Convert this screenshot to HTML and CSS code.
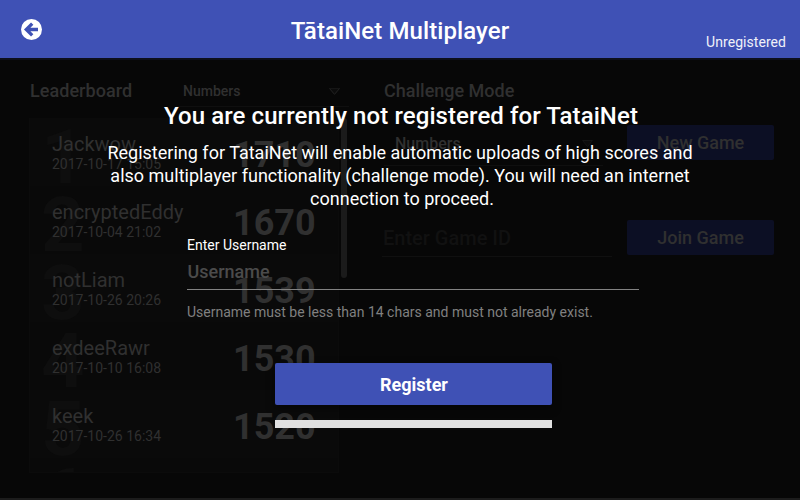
FILE: index.html
```
<!DOCTYPE html>
<html lang="en">
<head>
<meta charset="utf-8">
<title>TātaiNet Multiplayer</title>
<link rel="stylesheet" href="styles.css">
</head>
<body>
<header class="bar">
  <svg class="back" viewBox="0 0 21 21"><circle cx="10.5" cy="10.5" r="10.5" fill="#fff"/><path d="M11.2 4.6 L5.3 10.5 L11.2 16.4 M5.8 10.5 H17" fill="none" stroke="#3f51b5" stroke-width="3.3"/></svg>
  <h1 class="title">TātaiNet Multiplayer</h1>
  <span class="status">Unregistered</span>
</header>
<main class="page">
  <section class="leaderboard">
    <div class="head">
      <h2>Leaderboard</h2>
      <div class="select small"><span>Numbers</span><svg class="arrow" viewBox="0 0 11 7"><path d="M.5 .5H10.5L5.5 6.5Z"/><path class="edge" d="M.5 .5L5.5 6.3L10.5 .5"/></svg></div>
    </div>
    <div class="scroller">
      <ul class="list">
        <li><b class="rank">1</b><div class="who"><span class="name">Jackwow</span><span class="date">2017-10-17 15:05</span></div><b class="score">1710</b></li>
        <li><b class="rank">2</b><div class="who"><span class="name">encryptedEddy</span><span class="date">2017-10-04 21:02</span></div><b class="score">1670</b></li>
        <li><b class="rank">3</b><div class="who"><span class="name">notLiam</span><span class="date">2017-10-26 20:26</span></div><b class="score">1539</b></li>
        <li><b class="rank">4</b><div class="who"><span class="name">exdeeRawr</span><span class="date">2017-10-10 16:08</span></div><b class="score">1530</b></li>
        <li><b class="rank">5</b><div class="who"><span class="name">keek</span><span class="date">2017-10-26 16:34</span></div><b class="score">1520</b></li>
        <li><b class="rank">6</b></li>
      </ul>
      <div class="thumb"></div>
    </div>
  </section>
  <section class="challenge">
    <h2>Challenge Mode</h2>
    <div class="line">
      <div class="select large"><span>Numbers</span><svg class="arrow" viewBox="0 0 11 7"><path d="M.5 .5H10.5L5.5 6.5Z"/></svg></div>
      <div class="dim-button">New Game</div>
    </div>
    <div class="line">
      <div class="game-id">Enter Game ID</div>
      <div class="dim-button">Join Game</div>
    </div>
  </section>
</main>
<div class="modal">
  <h2 class="modal-title">You are currently not registered for TataiNet</h2>
  <p class="modal-text">Registering for TataiNet will enable automatic uploads of high scores and<br>also multiplayer functionality (challenge mode). You will need an internet<br><span class="last">connection to proceed.</span></p>
  <div class="field">
    <span class="label">Enter Username</span>
    <div class="input">Username</div>
    <span class="hint">Username must be less than 14 chars and must not already exist.</span>
  </div>
  <div class="register">Register</div>
  <div class="progress"></div>
</div>
</body>
</html>
```
FILE: styles.css
```
* { box-sizing: border-box; }
body {
  margin: 0;
  width: 800px;
  height: 500px;
  overflow: hidden;
  position: relative;
  background: #070707;
  color: #303030;
  font-family: Roboto, sans-serif;
}
h1, h2, p, ul { margin: 0; padding: 0; }
h1, h2 { font-weight: 500; }
.bar {
  height: 60px;
  background: #3f51b5;
  border-bottom: 2px solid #0d0f1c;
  color: #fff;
  display: grid;
  grid-template-columns: 150px 1fr 150px;
}
.back { width: 21px; height: 21px; margin: 19px 0 0 21px; }
.title { font-size: 24px; line-height: 54px; padding-top: 4px; text-align: center; letter-spacing: .09px; }
.status { font-size: 14px; line-height: 20px; margin-top: 32px; padding-right: 14px; text-align: right; letter-spacing: .05px; color: #f0f1f9; }

.page {
  height: 440px;
  border-bottom: 2px solid #1c1c1c;
  display: flex;
}
.page h2 { font-size: 18px; line-height: 32px; }
.leaderboard { width: 349px; padding: 15px 0 0 29px; }
.head { display: flex; height: 32px; }
.head h2 { width: 147px; padding-left: 1px; letter-spacing: .05px; }
.select { display: flex; justify-content: space-between; font-weight: 500; border-bottom: 1px solid #0f0f0f; }
.select .arrow { width: 11px; height: 7px; fill: #0c0c0c; stroke: #151515; stroke-width: 1; }
.arrow .edge { fill: none; stroke: #1f1f1f; }
.small { width: 173px; height: 32px; padding: 0 9px 0 7px; font-size: 14px; line-height: 32px; }
.small .arrow { margin-top: 13px; }
.scroller { display: flex; gap: 2px; margin-top: 11px; height: 355px; }
.list { width: 310px; height: 355px; overflow: hidden; list-style: none; background: #0a0a0a; border: 1px solid #0b0b0b; border-top: 0; }
.list li { display: flex; height: 68px; background: #0a0a0a; }
.list li:nth-child(even) { background: #090909; }
.rank { width: 44px; margin-left: 11px; font-size: 76px; line-height: 78px; color: #0e0e0e; }
.who { position: relative; display: flex; flex-direction: column; margin-left: -33px; width: 181px; padding-top: 14px; }
.name { font-size: 20px; line-height: 24px; }
.date { font-size: 14px; line-height: 16px; }
.score { font-size: 36px; line-height: 75px; color: #303030; }
.thumb { width: 6px; height: 160px; border-radius: 3px; background: #1b1b1b; }

.challenge { width: 425px; padding: 15px 9px 0 35px; }
.line { display: flex; justify-content: space-between; height: 35px; margin-top: 18px; }
.line + .line { margin-top: 60px; }
.large { width: 219px; height: 41px; padding: 0 10px 0 11px; font-size: 16px; line-height: 37px; }
.large .arrow { margin-top: 15px; }
.game-id { width: 230px; height: 37px; margin-left: -2px; padding-left: 1px; font-size: 20px; line-height: 37px; font-weight: 500; color: #111; border-bottom: 1px solid #101010; }
.dim-button { width: 147px; height: 35px; margin-right: -9px; border-radius: 2px; background: #0c0f24; font-size: 18px; font-weight: 500; line-height: 36px; text-align: center; }

.modal { position: absolute; left: 0; top: 60px; width: 800px; height: 438px; color: #fff; padding-top: 41px; }
.modal-title { font-size: 24px; line-height: 30px; text-align: center; padding-left: 2px; letter-spacing: .09px; }
.modal-text { margin-top: 10px; font-size: 18px; line-height: 23px; text-align: center; letter-spacing: .01px; }
.last { padding-left: 4px; }
.field { margin: 26px 0 0 187px; width: 452px; display: flex; flex-direction: column; }
.label { font-size: 14px; line-height: 18px; }
.input { height: 36px; border-bottom: 1px solid #828282; padding-left: .5px; font-size: 18px; line-height: 35px; font-weight: 500; color: #4b4b4b; }
.hint { margin-top: 13px; font-size: 14px; line-height: 18px; color: #808080; }
.register { margin: 42px 0 0 275px; width: 277px; height: 42px; padding: 2px 0 0 1px; border-radius: 2px; background: #3f51b5; box-shadow: 0 3px 8px rgba(0, 0, 0, .5); font-size: 18px; line-height: 40px; font-weight: 700; text-align: center; }
.progress { margin: 15px 0 0 275px; width: 277px; height: 8px; background: #e0e0e0; }
```
